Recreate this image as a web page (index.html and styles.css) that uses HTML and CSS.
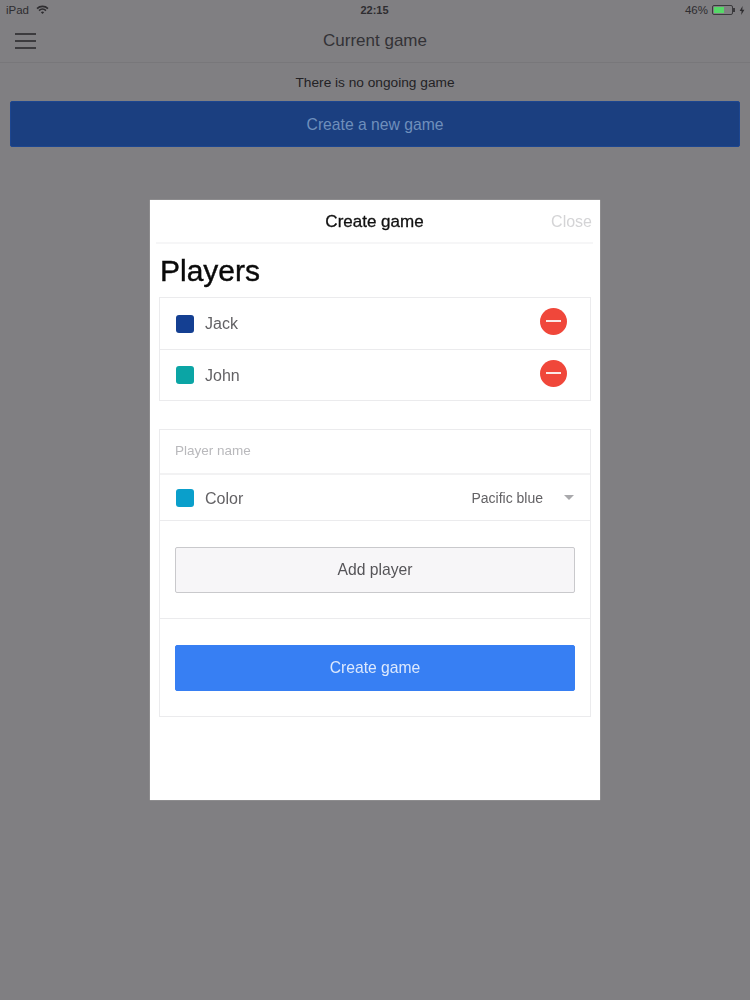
FILE: index.html
```html
<!DOCTYPE html>
<html lang="en">
<head>
    <meta charset="UTF-8">
    <meta name="viewport" content="width=device-width, initial-scale=1.0">
    <title>Current game</title>
    <link rel="stylesheet" href="styles.css">
</head>
<body>
    <div class="status-bar">
        <div class="status-left">
            <span>iPad</span>
            <svg class="wifi" width="13" height="10" viewBox="0 0 14 11">
                <path d="M1 4 A8.5 8.5 0 0 1 13 4" fill="none" stroke="#2e2d30" stroke-width="1.8"/>
                <path d="M3.2 6.1 A5.4 5.4 0 0 1 10.8 6.1" fill="none" stroke="#2e2d30" stroke-width="1.8"/>
                <path d="M5.2 8 A2.6 2.6 0 0 1 8.8 8 L7 10 Z" fill="#2e2d30"/>
            </svg>
        </div>
        <div class="status-time">22:15</div>
        <div class="status-right">
            <span>46%</span>
            <span class="battery"><span class="battery-level"></span></span>
            <svg width="6" height="9" viewBox="0 0 6 9"><path d="M3.6 0 L0.6 5 H2.6 L2.2 9 L5.4 3.8 H3.3 Z" fill="#2e2d30"/></svg>
        </div>
    </div>

    <header class="nav-bar">
        <div class="menu-icon"><span></span><span></span><span></span></div>
        <h1>Current game</h1>
    </header>

    <main class="content">
        <p>There is no ongoing game</p>
        <button class="btn btn-dimmed">Create a new game</button>
    </main>

    <div class="overlay">
        <div class="modal">
            <div class="modal-header">
                <h2>Create game</h2>
                <span class="close">Close</span>
            </div>
            <div class="modal-body">
                <h3>Players</h3>
                <ul class="list players">
                    <li class="row">
                        <span class="swatch swatch-navy"></span>
                        <span class="row-label">Jack</span>
                        <span class="remove"></span>
                    </li>
                    <li class="row">
                        <span class="swatch swatch-teal"></span>
                        <span class="row-label">John</span>
                        <span class="remove"></span>
                    </li>
                </ul>
                <div class="list form">
                    <div class="row row-input">Player name</div>
                    <div class="row row-color">
                        <span class="swatch swatch-blue"></span>
                        <span class="row-label">Color</span>
                        <span class="select-value">Pacific blue</span>
                        <span class="caret"></span>
                    </div>
                    <div class="row row-button">
                        <button class="btn btn-light">Add player</button>
                    </div>
                    <div class="row row-button">
                        <button class="btn btn-primary">Create game</button>
                    </div>
                </div>
            </div>
        </div>
    </div>
</body>
</html>
```

FILE: styles.css
```css
* {
    margin: 0;
    padding: 0;
    box-sizing: border-box;
}

body {
    font-family: "Liberation Sans", Arial, sans-serif;
    background: #807f82;
    height: 1000px;
    overflow: hidden;
    color: #2e2d30;
}

/* Status bar */
.status-bar {
    display: grid;
    grid-template-columns: 1fr auto 1fr;
    align-items: center;
    height: 20px;
    padding: 0 5px 0 6px;
    font-size: 11.5px;
}

.status-left {
    display: flex;
    align-items: center;
    gap: 7px;
    color: #2e2d30;
}

.status-time {
    font-weight: bold;
    font-size: 11px;
    margin-left: -2px;
}

.status-right {
    display: flex;
    align-items: center;
    justify-content: flex-end;
    gap: 4px;
    color: #2e2d30;
}

.battery {
    display: block;
    position: relative;
    width: 21px;
    height: 10px;
    margin-right: 2px;
    padding: 1px;
    border: 1px solid #3a393c;
    border-radius: 2px;
}

.battery::after {
    content: "";
    position: absolute;
    right: -3px;
    top: 2px;
    width: 2px;
    height: 4px;
    background: #3a393c;
}

.battery-level {
    display: block;
    width: 10px;
    height: 100%;
    background: #56d868;
}

/* Nav bar */
.nav-bar {
    position: relative;
    height: 43px;
    border-bottom: 1px solid #78777a;
    display: flex;
    align-items: center;
    justify-content: center;
}

.nav-bar h1 {
    font-size: 17px;
    font-weight: normal;
    color: #333236;
}

.menu-icon {
    position: absolute;
    left: 15px;
    top: 13px;
    display: flex;
    flex-direction: column;
    gap: 5px;
    width: 21px;
}

.menu-icon span {
    display: block;
    height: 2px;
    background: #3c3b3e;
}

/* Page behind the dialog */
.content {
    padding: 0 10px;
    text-align: center;
}

.content p {
    font-size: 13.7px;
    line-height: 36px;
    padding-top: 2px;
    color: #232225;
}

.btn {
    display: block;
    width: 100%;
    height: 46px;
    border: 1px solid transparent;
    border-radius: 2px;
    font-family: inherit;
    font-size: 15.7px;
}

.btn-dimmed {
    background: #1b3f80;
    border-color: #1d4690;
    padding-top: 2px;
    color: #6f8fbc;
}

/* Dialog */
.overlay {
    position: fixed;
    top: 0;
    left: 0;
    width: 100%;
    height: 100%;
    display: flex;
    align-items: center;
    justify-content: center;
}

.modal {
    width: 450px;
    height: 600px;
    background: white;
    box-shadow: 0 0 1px rgba(255,255,255,0.6);
}

.modal-header {
    position: relative;
    height: 44px;
    padding-top: 1px;
    margin: 0 7px 0 6px;
    border-bottom: 2px solid #f6f6f7;
    display: flex;
    align-items: center;
    justify-content: center;
}

.modal-header h2 {
    font-size: 17px;
    font-weight: normal;
    -webkit-text-stroke: 0.3px #111;
    color: #111;
}

.close {
    position: absolute;
    right: 1px;
    top: 13px;
    font-size: 16px;
    color: #d4d4d6;
}

.modal-body {
    padding: 0 9px;
}

.modal-body h3 {
    font-size: 30px;
    font-weight: normal;
    -webkit-text-stroke: 0.4px #0a0a0a;
    line-height: 32px;
    height: 53px;
    padding: 11px 0 0 1px;
    color: #0a0a0a;
}

.list {
    list-style: none;
    border: 1px solid #ebebed;
}

.players {
    margin-bottom: 28px;
}

.row {
    display: flex;
    align-items: center;
    padding: 0 16px;
    border-bottom: 1px solid #ebebed;
}

.row:last-child {
    border-bottom: none;
}

.players .row {
    height: 52px;
}

.players .row:last-child {
    height: 50px;
}

.swatch {
    width: 18px;
    height: 18px;
    margin-right: 11px;
    border-radius: 3px;
}

.swatch-navy {
    background: #143f92;
}

.swatch-teal {
    background: #0ba5a5;
}

.swatch-blue {
    background: #0a9fcb;
}

.row-label {
    font-size: 16px;
    color: #636265;
}

.players .row:last-child .row-label,
.row-color .row-label {
    padding-top: 2px;
}

.remove {
    position: relative;
    width: 27px;
    height: 27px;
    margin-left: auto;
    margin-right: 7px;
    margin-top: -4px;
    border-radius: 50%;
    background: #f0473a;
}

.remove::after {
    content: "";
    position: absolute;
    left: 6px;
    right: 6px;
    top: 12px;
    height: 2px;
    background: #fbe9e6;
}

.row-input {
    height: 45px;
    padding: 0 15px 3px;
    font-size: 13.5px;
    color: #b9b9bc;
    border-bottom-width: 2px;
    border-bottom-color: #f2f2f3;
}

.row-color {
    height: 46px;
}

.select-value {
    margin-left: auto;
    margin-right: 21px;
    font-size: 14px;
    color: #636265;
}

.caret {
    width: 0;
    height: 0;
    border-left: 5px solid transparent;
    border-right: 5px solid transparent;
    border-top: 5px solid #a9a9ac;
}

.row-button {
    height: 98px;
    padding: 0 15px;
}

.row-button:last-child {
    height: 97px;
}

.btn-light {
    background: #f7f6f8;
    border-color: #c9c9cc;
    color: #555458;
}

.btn-primary {
    background: #377ff3;
    border-color: #377ff3;
    color: #dce9fd;
}
```
